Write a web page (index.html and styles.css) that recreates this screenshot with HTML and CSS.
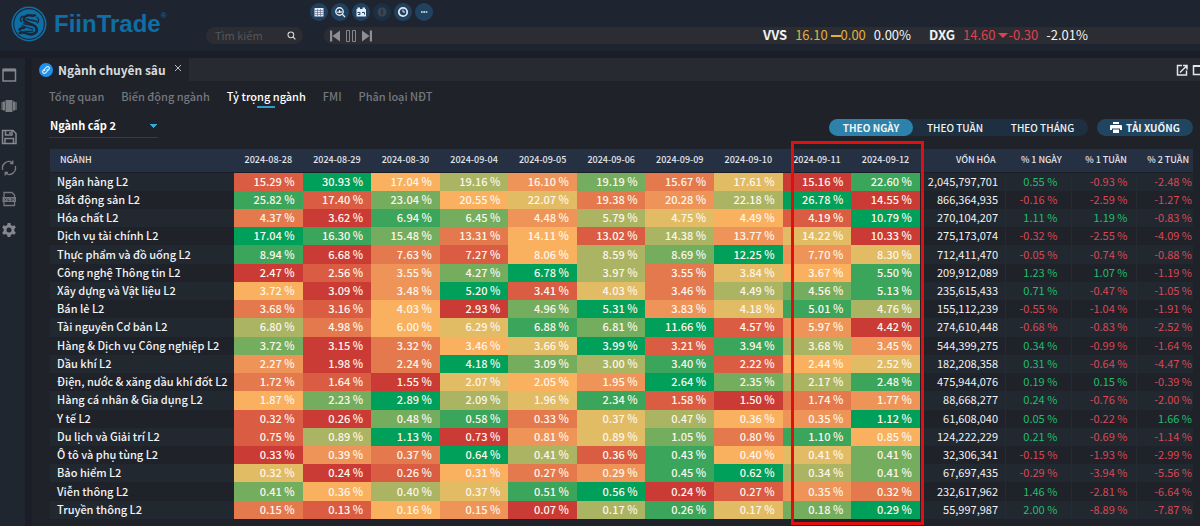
FILE: index.html
```
<!DOCTYPE html>
<html lang="vi">
<head>
<meta charset="utf-8">
<title>FiinTrade</title>
<link rel="stylesheet" href="styles.css">
</head>
<body>
<header class="topbar">
  <a class="brand" href="#">
    <svg class="brand-mark" viewBox="0 0 36 36" aria-hidden="true">
      <circle cx="18" cy="18" r="16.7" fill="none" stroke="#0f6ea3" stroke-width="1.6"/>
      <circle cx="18" cy="18" r="14.8" fill="#0f6ea3"/>
      <path d="M24.500 8.500c-1.500 2.500-4 .5-7 .8-3.500.3-5.500 2.700-4.500 5 1.500 3.200 11 3.200 12.500 8 1.200 4-2.500 6.700-7 6-4.500-.7-6-3.800-10.500-.8M8 24.500c1.500-2.500 4-3.500 6-2" fill="none" stroke="#1c2736" stroke-width="2.600"/>
      <path d="M11 16c-3-2-1.500-5.500 1.500-6M25.500 11c2.500 1.500 3 4 .5 6.500M15 13l11 2.500M10.500 19.500l12 4M12 17.500l13 2.500M14 25.500h8" fill="none" stroke="#1c2736" stroke-width="1.300"/>
    </svg>
    <span class="brand-name">FiinTrade</span><span class="brand-reg">®</span>
  </a>
  <div class="topbar-main">
    <div class="quick">
      <button class="round" aria-label="Bảng giá"><svg viewBox="0 0 18 18"><rect x="4.500" y="5" width="9" height="8.500" fill="#e6eaf2"/><path d="M5 7.500h8M5 9.500h8M5 11.500h8M7.500 6v7M10.500 6v7" stroke="#6c7391" stroke-width=".7"/></svg></button>
      <button class="round" aria-label="Tra cứu"><svg viewBox="0 0 18 18"><circle cx="8.500" cy="8.500" r="3.700" fill="none" stroke="#e6eaf2" stroke-width="1.400"/><path d="M11.300 11.300l2.700 2.700M7 10V8.500M8.500 10V7M10 10V8" stroke="#e6eaf2" stroke-width="1.300"/></svg></button>
      <button class="round" aria-label="Lịch"><svg viewBox="0 0 18 18"><path d="M4.500 6h9.500v7.500H4.500zM5.500 4.500h2.500v2H5.500zM10.500 4.500H13v2h-2.500z" fill="#e6eaf2"/><path d="M5.500 9.500h2.500v2H6M10 9.500h2.500v2" stroke="#27476a" fill="none"/></svg></button>
      <button class="round round-off" aria-label="Thông báo"><svg viewBox="0 0 18 18"><circle cx="9" cy="9" r="4.500" fill="#3d4450"/><path d="M9 6.500v5" stroke="#1b2f42" stroke-width="1.500"/></svg></button>
      <button class="round" aria-label="Lịch sử"><svg viewBox="0 0 18 18"><circle cx="9" cy="9" r="4.200" fill="none" stroke="#e6eaf2" stroke-width="1.700"/><path d="M9 6.500V9h2" fill="none" stroke="#e6eaf2"/></svg></button>
      <button class="round" aria-label="Thêm"><svg viewBox="0 0 18 18"><path d="M6 9h1.700M8.300 9h1.700M10.600 9h1.700" stroke="#e6eaf2" stroke-width="1.700"/></svg></button>
    </div>
    <div class="strip">
      <label class="search">
        <input type="text" placeholder="Tìm kiếm" aria-label="Tìm kiếm">
        <svg viewBox="0 0 10 10" aria-hidden="true"><circle cx="4.300" cy="4.300" r="3.200" fill="none" stroke="#d5d7da" stroke-width="1.200"/><path d="M6.700 6.700L9.300 9.300" stroke="#d5d7da" stroke-width="1.300"/></svg>
      </label>
      <div class="ticker">
        <div class="player">
          <button aria-label="Trước"><svg viewBox="0 0 12 12"><path d="M1 .5h2.200v11H1zM11 .5v11L3.500 6z" fill="#8d8f94"/></svg></button>
          <button aria-label="Dừng"><svg viewBox="0 0 12 12"><path d="M1.500.5h3v11h-3zM7.500.5h3v11h-3z" fill="none" stroke="#85878c"/></svg></button>
          <button aria-label="Sau"><svg viewBox="0 0 12 12"><path d="M8.800.5H11v11H8.800zM1 .5v11L8.500 6z" fill="#8d8f94"/></svg></button>
        </div>
        <div class="quotes">
          <div class="quote"><b>VVS</b><span class="flat">16.10 <i class="dash"></i>0.00</span><span>0.00%</span></div>
          <div class="quote"><b>DXG</b><span class="fall">14.60 <i class="tri"></i>-0.30</span><span>-2.01%</span></div>
        </div>
      </div>
    </div>
  </div>
</header>

<div class="body">
  <nav class="side" aria-label="Công cụ">
    <button aria-label="Cửa sổ"><svg viewBox="0 0 16 16"><path d="M2 2.500h12.500v11.500H2z" fill="none" stroke="#83868b" stroke-width="1.500"/><path d="M2 1.500h12.500v3H2z" fill="#83868b"/></svg></button>
    <button aria-label="Bố cục"><svg viewBox="0 0 16 16"><path d="M4.500 2h7v12h-7zM2 3.500h2v9H2zM12 3.500h2v9h-2zM.5 4h1.200v8H.5zM14.400 4h1.200v8h-1.200z" fill="#797c81"/></svg></button>
    <button aria-label="Lưu"><svg viewBox="0 0 16 16"><path d="M1.500 1.500h10.500l3 3v10H1.500zM4.500 1.500v4.500h6.500V1.500M4 14.500V9.500h8.500v5M9 3v2" fill="none" stroke="#85888d" stroke-width="1.500"/></svg></button>
    <button aria-label="Làm mới"><svg viewBox="0 0 16 16"><path d="M1.800 10A6.400 6.400 0 0 1 11.500 2.700M14.200 6A6.400 6.400 0 0 1 4.500 13.300M11.800.5v3H9M4.200 15.500v-3H7" fill="none" stroke="#797c81" stroke-width="1.300"/></svg></button>
    <button aria-label="Xuất XLSX"><svg viewBox="0 0 16 16"><path d="M3 6V1.500h8l2.500 2.500v2M3 11v3.500h10.500V11" fill="none" stroke="#74777c" stroke-width="1.300"/><path d="M1.500 6h13.500v5H1.500z" fill="#74777c"/><path d="M3.500 7.500l2 2M5.500 7.500l-2 2M7 7.500v2h1.500M10 7.500h1v2h-1M12 7.500l1.500 2" fill="none" stroke="#252c36" stroke-width=".7"/></svg></button>
    <button aria-label="Cài đặt"><svg viewBox="0 0 16 16"><path d="M6.600 1h2.800l.4 2 1.600.9 2-.7 1.400 2.400-1.500 1.400v2l1.500 1.400-1.400 2.400-2-.7-1.600.9-.4 2H6.600l-.4-2-1.600-.9-2 .7-1.400-2.400L2.700 9V7L1.200 5.600l1.400-2.400 2 .7L6.200 3zM8 5.500a2.500 2.500 0 1 0 0 5 2.500 2.500 0 1 0 0-5z" fill="#85888d" fill-rule="evenodd"/></svg></button>
  </nav>

  <main class="panel">
    <div class="tabbar">
      <div class="tab">
        <svg class="link-mark" viewBox="0 0 14 14" aria-hidden="true"><circle cx="7" cy="7" r="7" fill="#2191ea"/><path d="M6 8a1.700 1.700 0 0 1 0-2.300l1.600-1.600a1.600 1.600 0 0 1 2.300 2.300l-.9.900M8 6a1.700 1.700 0 0 1 0 2.300L6.400 9.900a1.600 1.600 0 0 1-2.300-2.300L5 6.700" fill="none" stroke="#e8f3fd" stroke-width="1.100"/></svg>
        <span class="tab-title">Ngành chuyên sâu</span>
        <button class="tab-close" aria-label="Đóng"><svg viewBox="0 0 8 8"><path d="M1 1l6 6M7 1L1 7" stroke="#b9bbbf"/></svg></button>
      </div>
      <div class="tab-tools">
        <button aria-label="Mở cửa sổ mới"><svg viewBox="0 0 12 12"><path d="M6 1.500H1.500v9.500h9V6.500M7 1.500h4v4M4 8.500l6.500-6.500" fill="none" stroke="#e4e5e7" stroke-width="1.500"/></svg></button>
        <button aria-label="Phóng to"><svg viewBox="0 0 12 12"><path d="M1.500 2h10v8.500h-10z" fill="none" stroke="#e4e5e7" stroke-width="1.500"/><path d="M1 1h11v2H1z" fill="#e4e5e7"/></svg></button>
      </div>
    </div>

    <nav class="subnav">
      <a href="#">Tổng quan</a>
      <a href="#">Biến động ngành</a>
      <a href="#" class="on">Tỷ trọng ngành</a>
      <a href="#">FMI</a>
      <a href="#">Phân loại NĐT</a>
    </nav>

    <div class="controls">
      <div class="picker">
        <select aria-label="Cấp ngành"><option>Ngành cấp 2</option></select>
      </div>
      <div class="actions">
        <div class="segments">
          <button class="on">THEO NGÀY</button>
          <button>THEO TUẦN</button>
          <button>THEO THÁNG</button>
        </div>
        <button class="download">
          <svg viewBox="0 0 12 12" aria-hidden="true"><path d="M3 1h6v2H3zM1 4h10q1 0 1 1v4h-2V7.500H2V9H0V5q0-1 1-1zM3 8.500h6V12H3z" fill="#fff"/></svg>
          TẢI XUỐNG
        </button>
      </div>
    </div>

    <div class="board">
      <table class="heat">
        <colgroup><col class="c-name"><col span="10" class="c-day"><col class="c-cap"><col class="c-d1"><col class="c-w1"><col class="c-w2"></colgroup>
        <thead>
          <tr><th class="name">NGÀNH</th><th>2024-08-28</th><th>2024-08-29</th><th>2024-08-30</th><th>2024-09-04</th><th>2024-09-05</th><th>2024-09-06</th><th>2024-09-09</th><th>2024-09-10</th><th>2024-09-11</th><th>2024-09-12</th><th class="cap">VỐN HÓA</th><th class="d1">% 1 NGÀY</th><th class="w1">% 1 TUẦN</th><th class="w2">% 2 TUẦN</th></tr>
        </thead>
        <tbody id="rows"></tbody>
      </table>
      <div class="marker"></div>
    </div>
  </main>
</div>
<script src="table.js"></script>
</body>
</html>
```
FILE: table.js
```
// name | daily weights | heat level per day (0 = lowest, 9 = highest) | market cap | 1 day, 1 week, 2 weeks
const data = `Ngân hàng L2|15.29 30.93 17.04 19.16 16.10 19.19 15.67 17.61 15.16 22.60|1946372508|2,045,797,701|0.55 -0.93 -2.48
Bất động sản L2|25.82 17.40 23.04 20.55 22.07 19.38 20.28 22.18 26.78 14.55|8174523690|866,364,935|-0.16 -2.59 -1.27
Hóa chất L2|4.37 3.62 6.94 6.45 4.48 5.79 4.75 4.49 4.19 10.79|2087365419|270,104,207|1.11 1.19 -0.83
Dịch vụ tài chính L2|17.04 16.30 15.48 13.31 14.11 13.02 14.38 13.77 14.22 10.33|9872416350|275,173,074|-0.32 -2.55 -4.09
Thực phẩm và đồ uống L2|8.94 6.68 7.63 7.27 8.06 8.59 8.69 12.25 7.70 8.30|8021467935|712,411,470|-0.05 -0.74 -0.88
Công nghệ Thông tin L2|2.47 2.56 3.55 4.27 6.78 3.97 3.55 3.84 3.67 5.50|0137962548|209,912,089|1.23 1.07 -1.19
Xây dựng và Vật liệu L2|3.72 3.09 3.48 5.20 3.41 4.03 3.46 4.49 4.56 5.13|4039152678|235,615,433|0.71 -0.47 -1.05
Bán lẻ L2|3.68 3.16 4.03 2.93 4.96 5.31 3.83 4.18 5.01 4.76|2140793586|155,112,239|-0.55 -1.04 -1.91
Tài nguyên Cơ bản L2|6.80 4.98 6.00 6.29 6.88 6.81 11.66 4.57 5.97 4.42|6245879130|274,610,448|-0.68 -0.83 -2.52
Hàng & Dịch vụ Công nghiệp L2|3.72 3.15 3.32 3.46 3.66 3.99 3.21 3.94 3.68 3.45|7024591863|544,399,275|0.34 -0.99 -1.64
Dầu khí L2|2.27 1.98 2.24 4.18 3.09 3.00 3.40 2.22 2.44 2.52|3029768145|182,208,358|0.31 -0.64 -4.47
Điện, nước & xăng dầu khí đốt L2|1.72 1.64 1.55 2.07 2.05 1.95 2.64 2.35 2.17 2.48|2105439768|475,944,076|0.19 0.15 -0.39
Hàng cá nhân & Gia dụng L2|1.87 2.23 2.89 2.09 1.96 2.34 1.58 1.50 1.74 1.77|4796581023|88,668,277|0.24 -0.76 -2.00
Y tế L2|0.32 0.26 0.48 0.58 0.33 0.37 0.47 0.36 0.35 1.12|1078256439|61,608,040|0.05 -0.22 1.66
Du lịch và Giải trí L2|0.75 0.89 1.13 0.73 0.81 0.89 1.05 0.80 1.10 0.85|1690357284|124,222,229|0.21 -0.69 -1.14
Ô tô và phụ tùng L2|0.33 0.39 0.37 0.64 0.41 0.36 0.43 0.40 0.41 0.41|0329618457|32,306,341|-0.15 -1.93 -2.99
Bảo hiểm L2|0.32 0.24 0.26 0.31 0.27 0.29 0.45 0.62 0.34 0.41|5014238967|67,697,435|-0.29 -3.94 -5.56
Viễn thông L2|0.41 0.36 0.40 0.37 0.51 0.56 0.24 0.27 0.35 0.32|7465890132|232,617,962|1.46 -2.81 -6.64
Truyền thông L2|0.15 0.13 0.16 0.15 0.07 0.17 0.26 0.17 0.18 0.29|2143068579|55,997,987|2.00 -8.89 -7.87`;

const spans = ["d1", "w1", "w2"];
document.getElementById("rows").innerHTML = data.split("\n").map((line) => {
  const [name, days, levels, cap, changes] = line.split("|");
  const heat = days.split(" ").map((v, i) => `<td class="h h${levels[i]}">${v} %</td>`).join("");
  const moves = changes.split(" ").map((v, i) => `<td class="${spans[i]} ${v[0] === "-" ? "down" : "up"}">${v} %</td>`).join("");
  return `<tr><th class="name" scope="row">${name.replace("&", "&amp;")}</th>${heat}<td class="cap">${cap}</td>${moves}</tr>`;
}).join("");
```
FILE: styles.css
```
* { box-sizing: border-box; }

body {
  margin: 0;
  min-height: 100vh;
  display: flex;
  flex-direction: column;
  background: #1b1e26;
  color: #f2f3f5;
  font-family: "Noto Sans CJK SC", "Noto Sans", sans-serif;
  font-size: 11px;
  line-height: 18px;
  overflow-x: hidden;
}

button {
  margin: 0;
  padding: 0;
  border: 0;
  background: none;
  color: inherit;
  font: inherit;
}

svg { display: block; }
a { color: inherit; text-decoration: none; }

.topbar {
  display: flex;
  background: #1f2530;
  margin-bottom: 7px;
}

.brand {
  display: flex;
  align-items: center;
  width: 206px;
  padding: 0 0 3px 11px;
  color: #0f6ea3;
}
.brand-mark { width: 36px; height: 36px; margin-right: 7px; }
.brand-name {
  font: bold 24px/30px "Liberation Sans", sans-serif;
}
.brand-reg {
  align-self: flex-start;
  font: 8px/12px "Liberation Sans", sans-serif;
  margin-top: 10px;
}

.topbar-main { flex: 1; min-width: 0; padding: 3px 0 7px; }

.quick { display: flex; gap: 3px; padding-left: 104px; margin-bottom: 6px; }
.round { width: 18px; height: 18px; border-radius: 50%; background: #204260; }
.round-off { background: #1b3044; }

.strip { display: flex; gap: 21px; }
.search {
  display: flex;
  align-items: center;
  width: 97px;
  height: 17px;
  padding: 0 7px 0 9px;
  border-radius: 9px;
  background: #2b2d33;
}
.search input {
  flex: 1;
  min-width: 0;
  padding: 0 0 1px;
  border: 0;
  background: none;
  color: #e4e5e7;
  font: inherit;
  line-height: 16px;
}
.search input::placeholder { color: #53565c; opacity: 1; }
.search svg { width: 9px; height: 9px; }

.ticker {
  flex: 1;
  display: flex;
  align-items: center;
  justify-content: space-between;
  height: 17px;
  padding: 0 112px 0 5px;
  border-radius: 9px 0 0 9px;
  background: #2b2d33;
}
.player { display: flex; gap: 4px; }
.player svg { width: 12px; height: 12px; }
.quotes { display: flex; gap: 18px; padding-bottom: 2px; font-size: 13px; }
.quote { display: flex; gap: 8px; white-space: nowrap; }
.flat { color: #e2b13c; }
.fall { color: #e0404f; }
.dash, .tri { display: inline-block; vertical-align: middle; }
.dash { width: 10px; height: 2px; background: currentColor; }
.tri { border: 5px solid transparent; border-top-color: currentColor; border-bottom: 0; }

.body { flex: 1; display: flex; gap: 7px; }

.side {
  width: 25px;
  padding-top: 9px;
  display: flex;
  flex-direction: column;
  gap: 15px;
  background: #1f2630;
}
.side svg { width: 16px; height: 16px; margin-left: 1px; }

.panel {
  flex: 1;
  min-width: 0;
  display: flex;
  flex-direction: column;
  background: #1f2229;
}

.tabbar {
  display: flex;
  justify-content: space-between;
  height: 23px;
  background: #272a31;
}
.tab {
  display: flex;
  align-items: center;
  width: 157px;
  padding-left: 7px;
  background: #1f2229;
}
.link-mark { width: 14px; height: 14px; margin-right: 5px; }
.tab-title { font-size: 12px; font-weight: 700; color: #d9dadc; white-space: nowrap; }
.tab-close { margin: 0 0 4px 8px; }
.tab-close svg { width: 8px; height: 8px; }
.tab-tools { display: flex; align-items: center; gap: 4px; overflow: hidden; margin-right: -4px; }
.tab-tools svg { width: 12px; height: 12px; }

.subnav {
  display: flex;
  gap: 17px;
  padding: 6px 17px 0;
  color: #75787e;
  font-weight: 500;
}
.subnav .on {
  color: #fff;
  background: linear-gradient(#2f9dc9, #2f9dc9) center bottom / 18px 2px no-repeat;
}
.subnav a { padding-bottom: 3px; white-space: nowrap; }

.controls {
  display: flex;
  justify-content: space-between;
  align-items: center;
  padding: 8px 7px 0 17px;
}
.picker { display: flex; align-items: center; border-bottom: 1px solid #24405a; }
.picker select {
  width: 109px;
  height: 21px;
  padding: 0 0 4px 1px;
  border: 0;
  appearance: none;
  background: linear-gradient(to bottom right, #35a9d6 50%, transparent 50%) no-repeat 105px 8px / 4px 4px, linear-gradient(to bottom left, #35a9d6 50%, transparent 50%) no-repeat 101px 8px / 4px 4px;
  color: #fff;
  font: inherit;
  font-weight: 700;
}
.actions { display: flex; gap: 9px; font-size: 10px; line-height: 17px; }
.segments { display: flex; border-radius: 9px; background: #1e3040; }
.segments button { width: 84px; border-radius: 9px; font-weight: 500; }
.segments button:last-child { width: 91px; }
.segments .on { background: #2d82ab; font-weight: 700; }
.download {
  display: flex;
  align-items: center;
  justify-content: center;
  gap: 4px;
  width: 96px;
  height: 17px;
  border-radius: 9px;
  background: #1f4560;
  font-weight: 700;
}
.download svg { width: 12px; height: 12px; }

.board {
  position: relative;
  flex: 1;
  display: flex;
  margin: 11px 7px 7px 18px;
}
.heat {
  width: 100%;
  table-layout: fixed;
  border-collapse: collapse;
}
.c-name { width: 16.1%; }
.c-day { width: 6%; }
.c-cap { width: 7.5%; }
.c-d1 { width: 5.8%; }
.c-w1 { width: 5.7%; }
.c-w2 { width: 4.9%; }

.heat th, .heat td { padding: 0 0 2px; line-height: 16px; white-space: nowrap; }
.heat thead th {
  height: 23px;
  padding-bottom: 0;
  background: #263043;
  border-bottom: 1px solid #1b1e26;
  color: #e4e6ea;
  font-size: 9px;
  font-weight: 500;
}
.heat tbody tr:nth-child(odd) { background: #22282f; }
.heat td { text-align: right; }
.heat .name { text-align: left; padding-left: 7px; }
.heat thead .name { padding-left: 10px; }
.heat tbody .name { font-weight: 500; }
.heat .h { padding-right: 8px; color: #fdf6ea; font-weight: 500; }
.heat thead .cap, .heat thead .d1, .heat thead .w1, .heat thead .w2 { text-align: right; }
.heat .cap { padding-right: 7px; }
.heat .d1 { padding-right: 14px; }
.heat .w1 { padding-right: 9px; }
.heat .w2 { padding-right: 1px; }
.heat thead .cap, .heat thead .d1, .heat thead .w1 { padding-right: 10px; }
.heat thead .w2 { padding-right: 4px; }
.heat tbody .d1, .heat tbody .w1, .heat tbody .w2 { border-left: 1px solid #252b33; }

.h0 { background: #cb3b35; }
.h1 { background: #d95c43; }
.h2 { background: #e4794e; }
.h3 { background: #ee9459; }
.h4 { background: #f9b160; }
.h5 { background: #e2bb65; }
.h6 { background: #aab462; }
.h7 { background: #75ad5e; }
.h8 { background: #3ba55c; }
.h9 { background: #009f5a; }

.up { color: #1fbf6e; }
.down { color: #d84856; }

.marker {
  position: absolute;
  left: 64.8%;
  width: 11.7%;
  top: -8px;
  bottom: -6px;
  border: 3px solid #e01010;
  pointer-events: none;
}
```
